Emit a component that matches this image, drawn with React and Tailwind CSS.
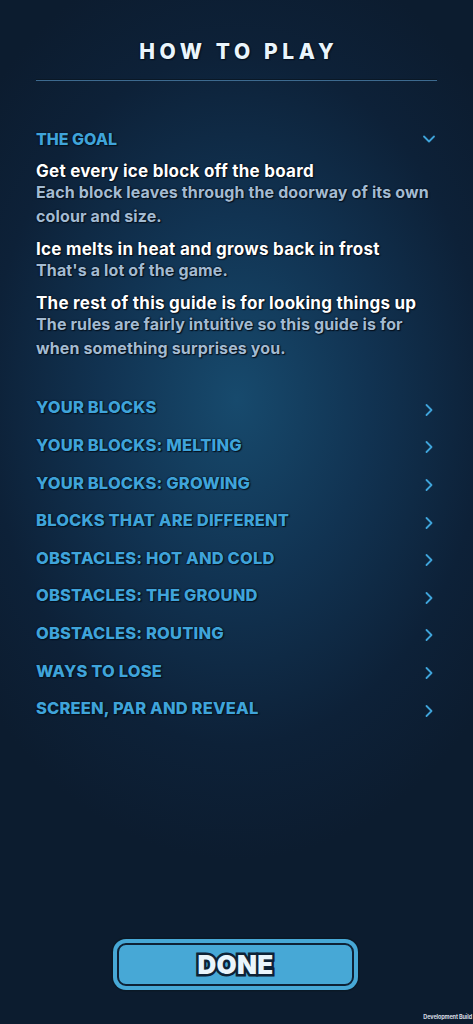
import { ChevronDown, ChevronRight } from "lucide-react";

const topics = [
  "YOUR BLOCKS",
  "YOUR BLOCKS: MELTING",
  "YOUR BLOCKS: GROWING",
  "BLOCKS THAT ARE DIFFERENT",
  "OBSTACLES: HOT AND COLD",
  "OBSTACLES: THE GROUND",
  "OBSTACLES: ROUTING",
  "WAYS TO LOSE",
  "SCREEN, PAR AND REVEAL",
];

const goals = [
  {
    title: "Get every ice block off the board",
    body: "Each block leaves through the doorway of its own colour and size.",
  },
  {
    title: "Ice melts in heat and grows back in frost",
    body: "That's a lot of the game.",
  },
  {
    title: "The rest of this guide is for looking things up",
    body: "The rules are fairly intuitive so this guide is for when something surprises you.",
  },
];

// dark outline round the game text
const outline = "[text-shadow:0_0_2px_#07121f,0_0_1px_#07121f,1px_1px_1px_#07121f]";

const HowToPlay = () => {
  return (
    <div
      className="relative h-[1024px] w-full overflow-hidden bg-[radial-gradient(ellipse_70%_45%_at_50%_39%,#174a6d_0%,#113352_40%,#0d2138_75%,#0c1c2f_100%)] flex flex-col"
      style={{ fontFamily: "Inter, 'Noto Sans', sans-serif" }}
    >
      {/* header */}
      <div className="pt-[40px] px-[36px]">
        <h1
          className={`text-center text-[21px] leading-[24px] font-extrabold tracking-[0.22em] pl-[0.22em] text-[#eaf5fc] ${outline}`}
        >
          HOW TO PLAY
        </h1>
        <div className="mt-[15px] h-[2px] bg-[#3d6a8f] border-t border-[#0a1826]" />
      </div>

      {/* open section */}
      <div className="px-[36px] mt-[48px]">
        <div className="flex items-center justify-between h-[20px]">
          <span className={`text-[16px] font-extrabold text-[#3fa4da] ${outline}`}>THE GOAL</span>
          <ChevronDown className="w-[20px] h-[20px] text-[#3fa4da] mr-[-2px]" strokeWidth={2.2} />
        </div>
        <div className="mt-[13px] flex flex-col gap-[12px]">
          {goals.map((g) => (
            <div key={g.title}>
              <p className={`text-[17px] leading-[18px] font-bold text-white tracking-[0.015em] whitespace-nowrap ${outline}`}>
                {g.title}
              </p>
              <p className={`text-[16px] leading-[24px] font-bold text-[#a3bbd2] tracking-[0.008em] ${outline}`}>
                {g.body}
              </p>
            </div>
          ))}
        </div>
      </div>

      {/* collapsed sections */}
      <ul className="px-[36px] mt-[29px]">
        {topics.map((t) => (
          <li key={t} className="flex items-center justify-between h-[37.6px]">
            <span className={`text-[16.5px] font-extrabold text-[#3fa4da] tracking-[0.01em] ${outline}`}>{t}</span>
            <ChevronRight className="w-[20px] h-[20px] text-[#3fa4da] mr-[-2px] mt-[4px]" strokeWidth={2.2} />
          </li>
        ))}
      </ul>

      <div className="flex-1" />

      {/* done button */}
      <div className="flex justify-center pb-[34px] pr-[2px]">
        <button className="w-[245px] h-[51px] rounded-[13px] bg-[#47a8d6] p-[4px] shadow-[0_0_0_1.5px_#0a1826]">
          <div className="h-full w-full rounded-[9px] border-2 border-[#0e2236] flex items-center justify-center">
            <span className="text-[26px] font-black text-[#eaf5fc] [-webkit-text-stroke:5px_#0e2236] [paint-order:stroke_fill] tracking-[0.01em]">
              DONE
            </span>
          </div>
        </button>
      </div>

      <span className="absolute right-[1px] bottom-[3px] text-[5.5px] font-bold tracking-[-0.02em] text-[#d8dde3]">
        Development Build
      </span>
    </div>
  );
};

export default function App() {
  return <HowToPlay />;
}
